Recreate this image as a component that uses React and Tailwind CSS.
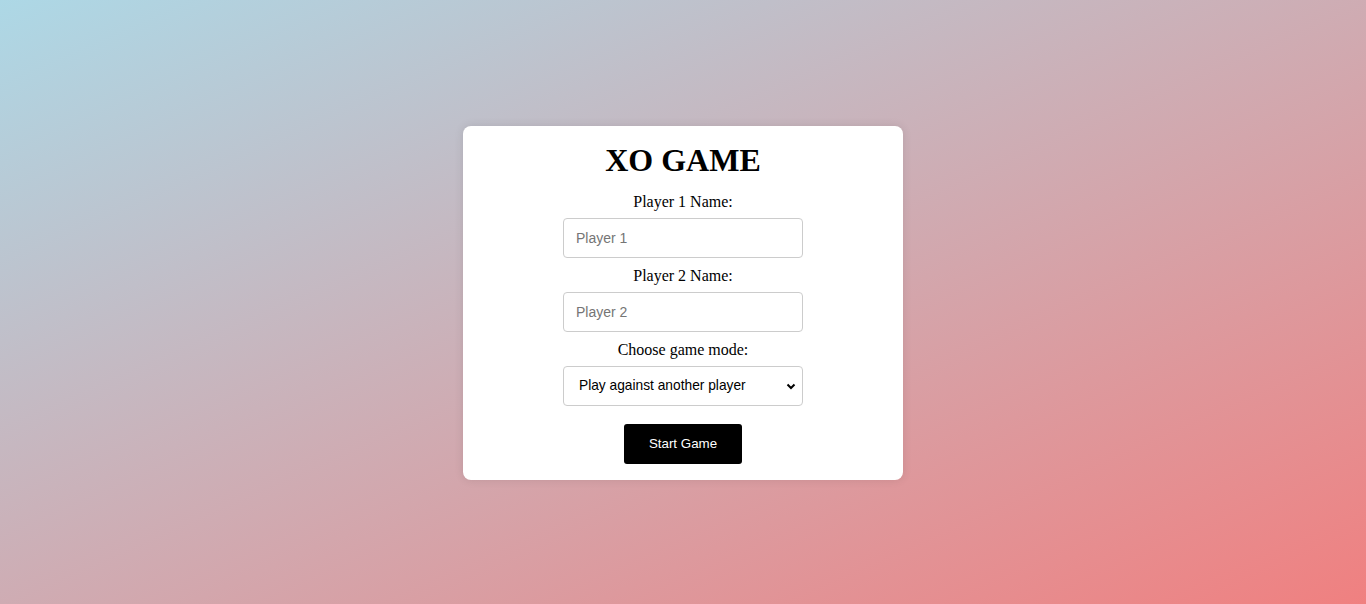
import React, { useState } from 'react';

const serif = "font-['Liberation_Serif','Times_New_Roman',serif]";
const sans = "font-['Liberation_Sans',Arial,sans-serif]";

const Field = ({ label, children }) => (
  <div className="flex flex-col items-center">
    <label className={`${serif} text-[16px] leading-[18px] pt-px text-black mb-[7px]`}>{label}</label>
    {children}
  </div>
);

export default function App() {
  const [p1, setP1] = useState('');
  const [p2, setP2] = useState('');
  const [mode, setMode] = useState('pvp');

  return (
    <div className="h-[604px] w-full pt-[2px] flex items-center justify-center bg-[linear-gradient(to_bottom_right,#add8e6,#f08080)]">
      <div className="w-[440px] bg-white rounded-lg shadow-[0_0_10px_rgba(0,0,0,0.1)] px-5 pt-4 pb-4 flex flex-col items-center">
        <h1 className={`${serif} text-[32px] leading-[36px] font-bold text-black mb-[14px]`}>XO GAME</h1>

        <div className="flex flex-col gap-2 w-full">
          <Field label="Player 1 Name:">
            <input
              value={p1}
              onChange={(e) => setP1(e.target.value)}
              placeholder="Player 1"
              className={`${sans} w-[240px] h-10 px-3 text-[14px] border border-[#ccc] rounded placeholder:text-[#757575] outline-none`}
            />
          </Field>
          <Field label="Player 2 Name:">
            <input
              value={p2}
              onChange={(e) => setP2(e.target.value)}
              placeholder="Player 2"
              className={`${sans} w-[240px] h-10 px-3 text-[14px] border border-[#ccc] rounded placeholder:text-[#757575] outline-none`}
            />
          </Field>
          <Field label="Choose game mode:">
            <div className="relative w-[240px]">
              <select
                value={mode}
                onChange={(e) => setMode(e.target.value)}
                className={`${sans} appearance-none w-full h-10 pl-[15px] pr-8 text-[13.75px] text-black bg-white border border-[#ccc] rounded outline-none`}
              >
                <option value="pvp">Play against another player</option>
                <option value="cpu">Play against computer</option>
              </select>
              <svg
                className="absolute right-[7px] top-1/2 -translate-y-1/2 pointer-events-none"
                width="10"
                height="10"
                viewBox="0 0 10 10"
              >
                <path d="M1.5 3.5 L5 7 L8.5 3.5" fill="none" stroke="black" strokeWidth="2" />
              </svg>
            </div>
          </Field>
        </div>

        <button className={`${sans} mt-[18px] w-[118px] h-10 bg-black text-white text-[13.33px] rounded-[3px]`}>
          Start Game
        </button>
      </div>
    </div>
  );
}
